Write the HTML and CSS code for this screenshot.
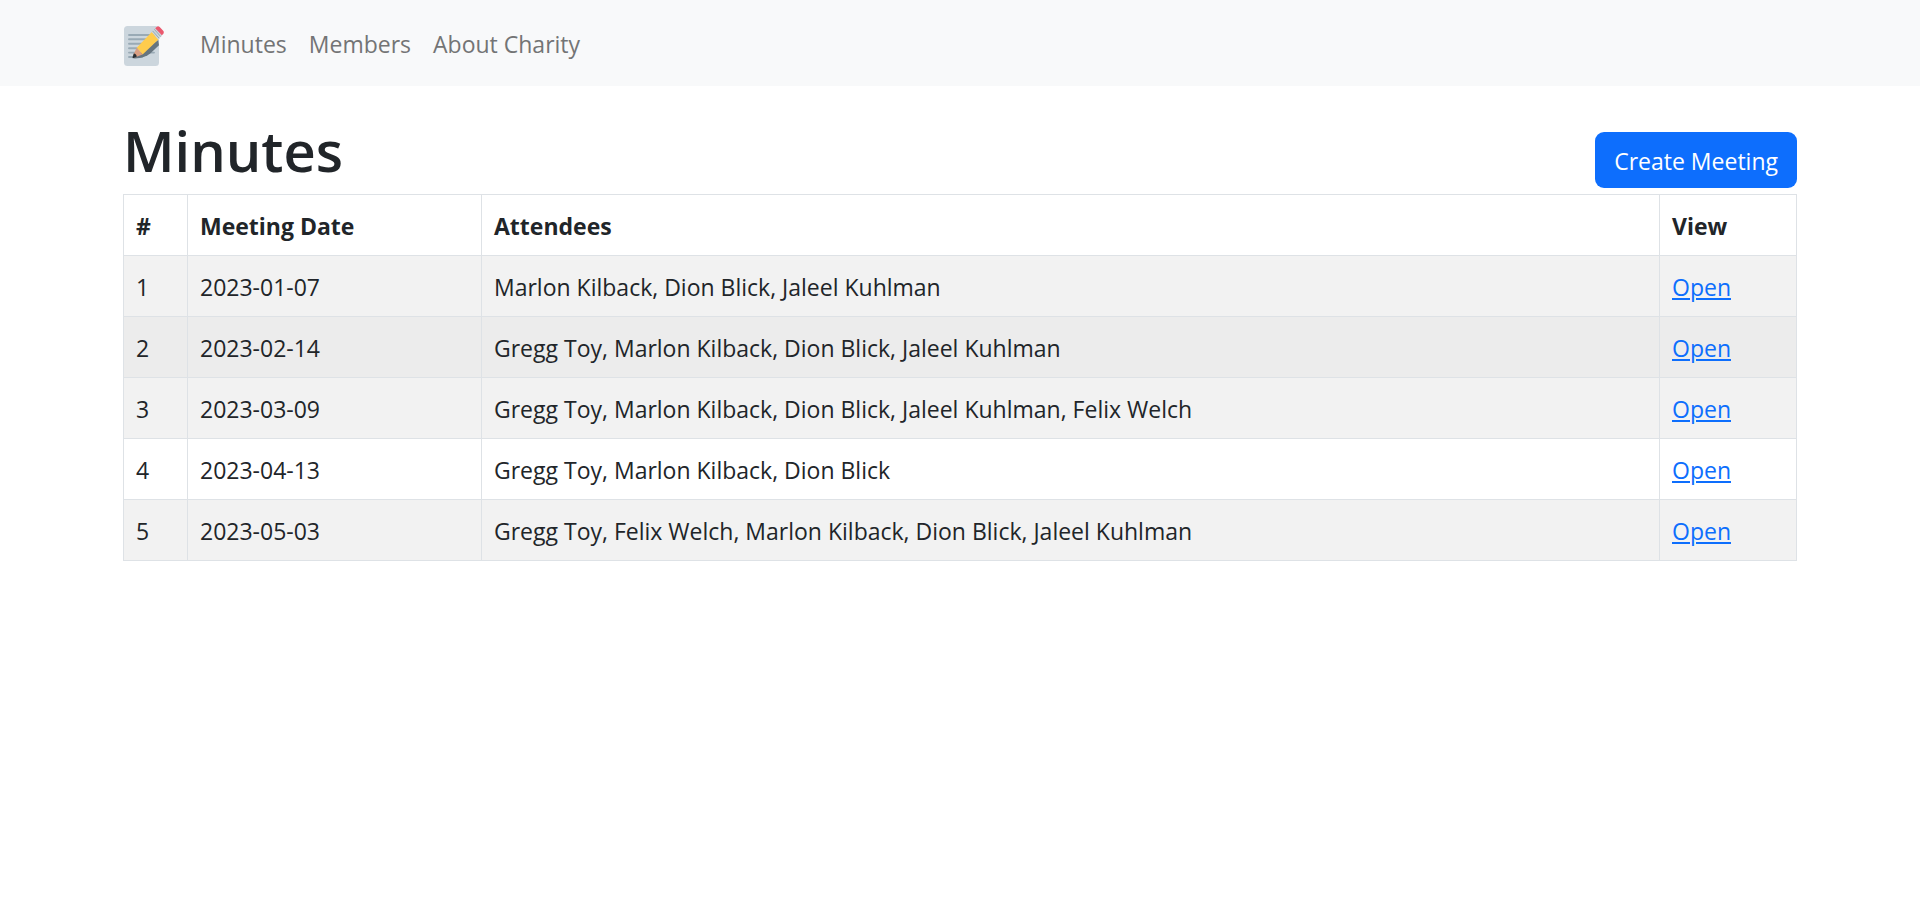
FILE: index.html
```html
<!DOCTYPE html>
<html lang="en">
<head>
  <meta charset="utf-8">
  <meta name="viewport" content="width=device-width, initial-scale=1">
  <title>Minutes</title>
  <link rel="stylesheet" href="styles.css">
</head>
<body>
  <header class="navbar">
    <nav class="container navbar-inner" aria-label="Main">
      <a class="brand" href="#" aria-label="Home">
        <svg class="brand-icon" viewBox="0 0 40 40" aria-hidden="true">
          <rect width="35" height="40" rx="3.5" fill="#ccd6dd"/>
          <path d="M5 9h25M5 13.3h25M5 17.7h25M5 22.2h25M5 26.6h25M5 31h13" stroke="#99aab5" stroke-width="1.9" stroke-linecap="round"/>
          <path d="M8.5 32.3 L34.2 14 L35 19.3 L26.5 27.2 C22 31 16 32.8 8.5 32.3Z" fill="#66757f"/>
          <path d="M12.7 21.8 L27.8 6 L34.4 13.4 L18.6 28.4Z" fill="#ffcc4d"/>
          <path d="M12.7 21.8 L18.6 28.4 L10.5 31.6 L9 29.5Z" fill="#d99e82"/>
          <path d="M9.8 27.4 C11.5 27.6 12.7 29 12.7 30.7 L9.6 32 C8.8 32.2 8.4 31.7 8.6 31Z" fill="#292f33"/>
          <path d="M27.6 5.8 L31.6 1.8 L38.2 9.2 L34.3 13.4Z" fill="#ccd6dd"/>
          <path d="M28.6 4.9 L35.2 12.3 M30.3 3.3 L36.8 10.7" stroke="#99aab5" stroke-width="1"/>
          <path d="M31.2 2.3 L32.6 .9 C33.5 0 34.8 0 35.7 1 L39.2 4.8 C40.1 5.8 40 7 39.2 7.9 L37.8 9.3Z" fill="#ea596e"/>
        </svg>
      </a>
      <ul class="nav-list">
        <li><a class="nav-link" href="#">Minutes</a></li>
        <li><a class="nav-link" href="#">Members</a></li>
        <li><a class="nav-link" href="#">About Charity</a></li>
      </ul>
    </nav>
  </header>
  <main class="container">
    <div class="page-head">
      <h1 class="page-title">Minutes</h1>
      <button class="button" type="button">Create Meeting</button>
    </div>
    <table class="table">
      <colgroup>
        <col class="col-number"><col class="col-date"><col><col class="col-view">
      </colgroup>
      <thead>
        <tr><th scope="col">#</th><th scope="col">Meeting Date</th><th scope="col">Attendees</th><th scope="col">View</th></tr>
      </thead>
      <tbody>
        <tr><td>1</td><td>2023-01-07</td><td>Marlon Kilback, Dion Blick, Jaleel Kuhlman</td><td><a class="link" href="#">Open</a></td></tr>
        <tr class="is-active"><td>2</td><td>2023-02-14</td><td>Gregg Toy, Marlon Kilback, Dion Blick, Jaleel Kuhlman</td><td><a class="link" href="#">Open</a></td></tr>
        <tr><td>3</td><td>2023-03-09</td><td>Gregg Toy, Marlon Kilback, Dion Blick, Jaleel Kuhlman, Felix Welch</td><td><a class="link" href="#">Open</a></td></tr>
        <tr><td>4</td><td>2023-04-13</td><td>Gregg Toy, Marlon Kilback, Dion Blick</td><td><a class="link" href="#">Open</a></td></tr>
        <tr><td>5</td><td>2023-05-03</td><td>Gregg Toy, Felix Welch, Marlon Kilback, Dion Blick, Jaleel Kuhlman</td><td><a class="link" href="#">Open</a></td></tr>
      </tbody>
    </table>
  </main>
</body>
</html>
```

FILE: styles.css
```css
*, *::before, *::after { box-sizing: border-box; }

body {
  margin: 0;
  background: #fff;
  color: #212529;
  font-family: "Segoe UI", "Open Sans", "Noto Sans", sans-serif;
  font-size: 23px;
  line-height: 36px;
}

.container {
  width: 100%;
  max-width: 1710px;
  margin: 0 auto;
  padding: 0 18px;
}

.navbar { background: #f8f9fa; padding: 13px 0; }
.navbar-inner { display: flex; align-items: center; }
.brand { display: flex; margin-right: 24px; padding-top: 6px; }
.brand-icon { display: block; width: 42px; height: 40px; }

.nav-list { display: flex; margin: 0; padding: 0; list-style: none; }
.nav-link {
  display: block;
  padding: 13px 11px 11px;
  color: #737475;
  text-decoration: none;
}

.page-head {
  display: flex;
  align-items: flex-end;
  justify-content: space-between;
  padding: 28px 0 6px;
}
.page-title {
  margin: 0;
  padding-bottom: 2px;
  font-size: 56px;
  font-weight: 600;
  line-height: 72px;
}
.button {
  padding: 11px 19px 9px;
  border: 0;
  border-radius: 9px;
  background: #0d6efd;
  color: #fff;
  font: inherit;
  cursor: pointer;
}

.table { width: 100%; border-collapse: collapse; table-layout: fixed; }
.col-number { width: 64px; }
.col-date { width: 294px; }
.col-view { width: 137px; }
.table th, .table td {
  padding: 13px 12px 11px;
  border: 1px solid #dee2e6;
  text-align: left;
}
.table th { font-weight: 700; }
.table tbody tr:nth-child(odd) { background: #f2f2f2; }
.table tbody .is-active { background: #ececec; }
.link { color: #0d6efd; text-decoration-thickness: 2px; text-underline-offset: 2px; }
```
